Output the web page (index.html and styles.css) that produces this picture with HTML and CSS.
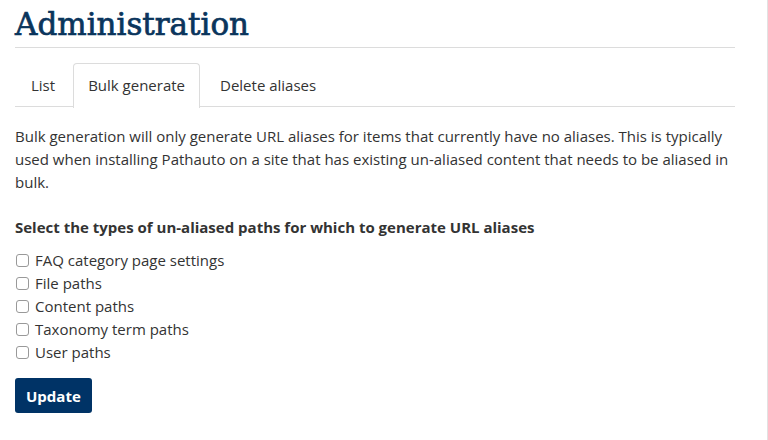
FILE: index.html
```html
<!DOCTYPE html>
<html>
<head>
<meta charset="utf-8">
<link rel="stylesheet" href="styles.css">
</head>
<body>
<div class="page">
  <main class="content">
    <h1 class="title">Administration</h1>
    <nav class="tabs">
      <a class="tab">List</a>
      <a class="tab active">Bulk generate</a>
      <a class="tab">Delete aliases</a>
    </nav>
    <p class="desc">Bulk generation will only generate URL aliases for items that currently have no aliases. This is typically used when installing Pathauto on a site that has existing un-aliased content that needs to be aliased in bulk.</p>
    <h2 class="label">Select the types of un-aliased paths for which to generate URL aliases</h2>
    <ul class="options">
      <li class="option"><span class="box"></span>FAQ category page settings</li>
      <li class="option"><span class="box"></span>File paths</li>
      <li class="option"><span class="box"></span>Content paths</li>
      <li class="option"><span class="box"></span>Taxonomy term paths</li>
      <li class="option"><span class="box"></span>User paths</li>
    </ul>
    <button class="btn">Update</button>
  </main>
  <aside class="side"></aside>
</div>
</body>
</html>
```
FILE: styles.css
```css
html, body { margin: 0; padding: 0; background: #fff; }
body { font-family: "Open Sans", sans-serif; color: #333; }
.page { display: flex; height: 440px; }
.content { width: 720px; padding-left: 15px; }
.side { flex: 1; border-left: 1px solid #e2e2e2; margin-left: 32px; background: #fdfdfd; }
.title {
  margin: 0; padding-top: 4px;
  font-family: "DejaVu Serif", serif; font-weight: normal;
  font-size: 31px; line-height: 40px; color: #0a355c;
  border-bottom: 1px solid #dcdcdc; height: 43px;
  -webkit-text-stroke: 0.7px #0a355c;
}
.tabs { display: flex; margin-top: 15px; border-bottom: 1px solid #dcdcdc; height: 43px; padding-left: 0; }
.tab { display: block; padding: 0 15px; line-height: 43px; font-size: 15px; color: #333; border: 1px solid transparent; border-bottom: none; border-radius: 4px 4px 0 0; }
.tab:first-child { padding-right: 17px; }
.tab:last-child { padding-left: 19px; }
.tab.active { border-color: #dcdcdc; background: #fff; margin-bottom: -1px; height: 44px; padding: 0 14px; }
.desc { margin: 18px 0 0; font-size: 15px; line-height: 23px; }
.label { margin: 22px 0 0; font-size: 15px; font-weight: bold; line-height: 23px; }
.options { list-style: none; margin: 10px 0 0; padding: 0; }
.option { display: flex; align-items: center; font-size: 15px; line-height: 23px; }
.box { width: 11px; height: 11px; border: 1px solid #999; border-radius: 3px; margin: 0 6px 0 1px; background: #fff; }
.btn {
  margin-top: 14px; background: #003366; color: #fff; border: none; border-radius: 3px;
  font-family: "Open Sans", sans-serif; font-weight: bold; font-size: 15px;
  height: 35px; padding: 0 11px;
}
```
